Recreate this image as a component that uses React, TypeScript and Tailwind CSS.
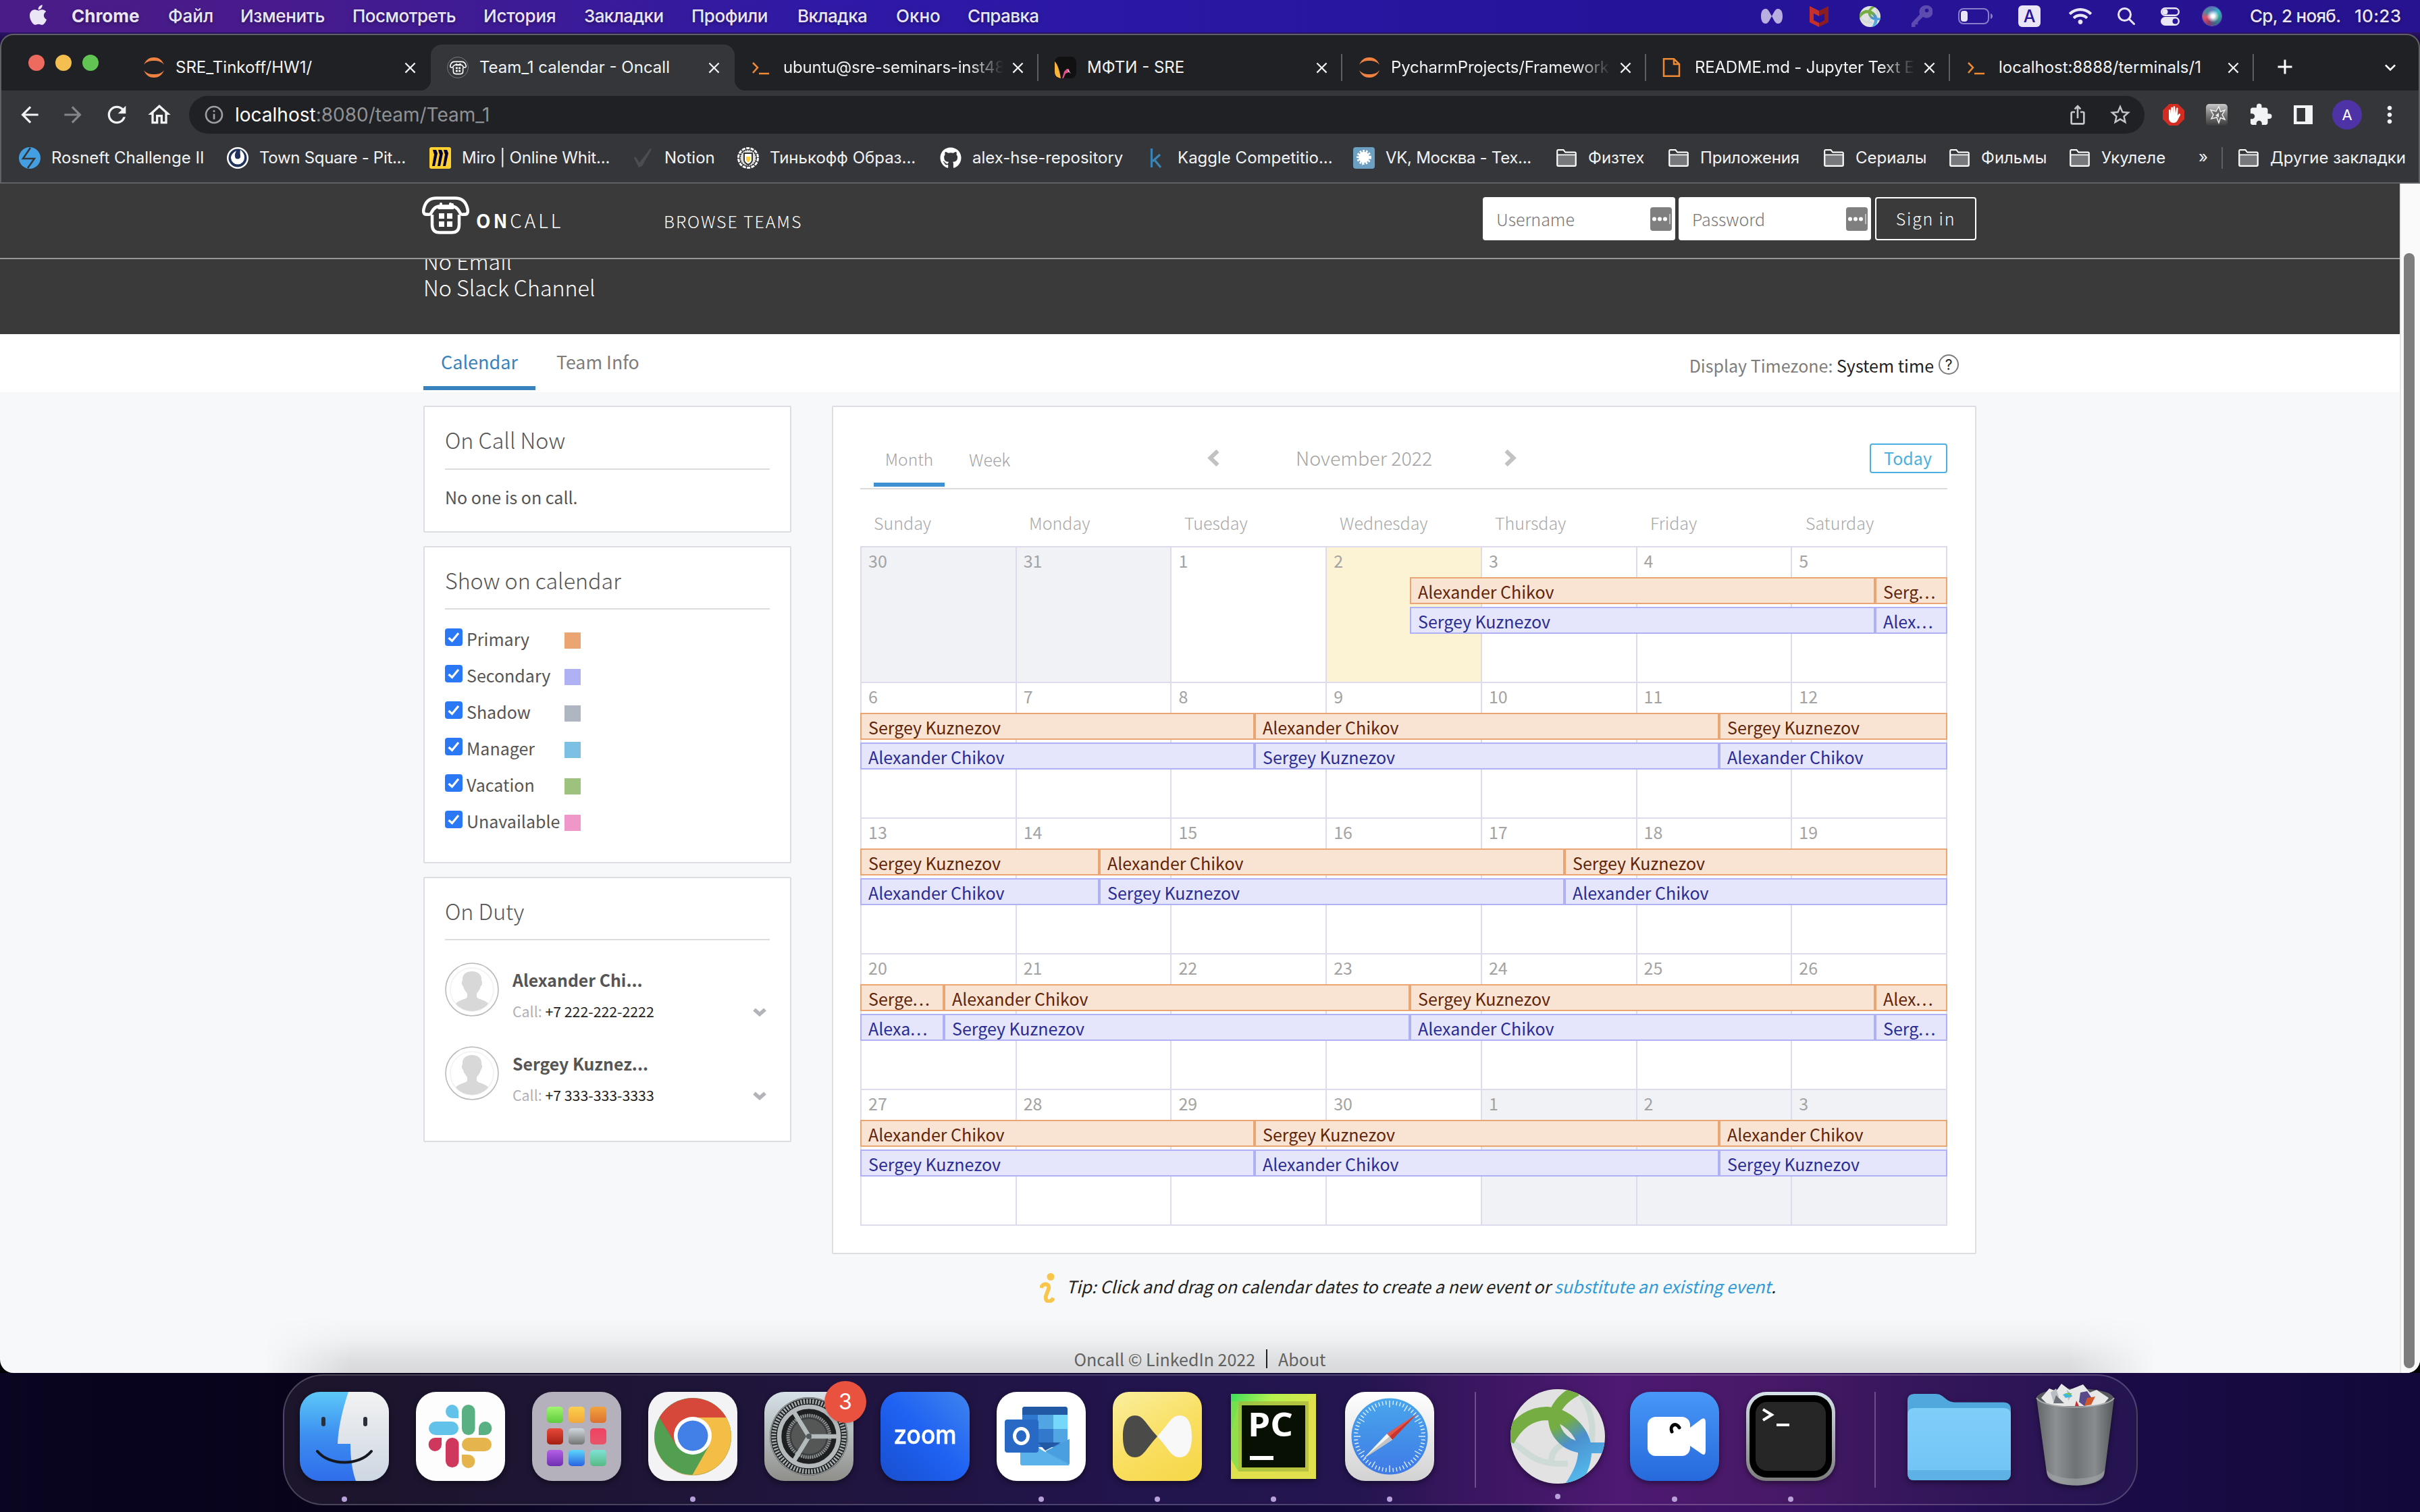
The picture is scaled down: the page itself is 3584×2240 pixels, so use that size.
import type { ReactNode } from "react";
import { FaApple, FaGithub, FaWifi } from "react-icons/fa";
import {
  MdAdd, MdArrowBack, MdArrowForward, MdExtension, MdInfoOutline, MdIosShare,
  MdKeyboardArrowDown, MdMoreVert, MdOutlineHome, MdRefresh, MdStarBorder, MdClose,
} from "react-icons/md";

/* ---------- macOS menu bar ---------- */

const menuItems: [string, string][] = [
  ["Chrome", "w-[143px] font-bold"],
  ["Файл", "w-[107px]"],
  ["Изменить", "w-[166px] tracking-[-0.3px]"],
  ["Посмотреть", "w-[194px] tracking-[-0.5px]"],
  ["История", "w-[149px] tracking-[-0.2px]"],
  ["Закладки", "w-[159px] tracking-[-0.6px]"],
  ["Профили", "w-[157px] tracking-[-0.5px]"],
  ["Вкладка", "w-[146px] tracking-[-0.6px]"],
  ["Окно", "w-[106px]"],
  ["Справка", "w-[120px] tracking-[-0.6px]"],
];

function MenuBar() {
  return (
    <div className="flex h-[48px] shrink-0 items-center bg-[linear-gradient(90deg,#4a1c87_0%,#471b8d_12%,#3a1b99_24%,#2f19a6_34%,#2a18a4_48%,#25139a_68%,#27138f_100%)] pl-[40px] text-[26px] font-medium leading-none text-[#eae6f5] [text-shadow:0_2px_5px_rgba(0,0,0,0.35)]">
      <FaApple className="mr-[33px] -mt-1 h-[34px] w-[33px] shrink-0" />
      {menuItems.map(([t, c]) => (
        <span key={t} className={"shrink-0 whitespace-nowrap " + c}>{t}</span>
      ))}
      <div className="ml-auto flex shrink-0 items-center pr-[9px]">
        <svg className="mr-[40px] h-[22px] w-[32px]" viewBox="0 0 32 22">
          <path d="M7 0C2 0 0 5 0 11s2 11 7 11c4 0 6-6 9-11C13 6 11 0 7 0zM25 0c5 0 7 5 7 11s-2 11-7 11c-4 0-6-6-9-11 3-5 5-11 9-11z" fill="#b9aee0" />
        </svg>
        <svg className="mr-[46px] h-[31px] w-[28px]" viewBox="0 0 28 31">
          <path d="M0 0l14 7v8l-8-4v10l8 4v6L0 24z" fill="#c5302b" />
          <path d="M28 0L14 7v8l8-4v10l-8 4v6l14-7z" fill="#8a1c22" />
        </svg>
        <svg className="mr-[45px] h-[31px] w-[31px]" viewBox="0 0 140 140"><AnyConnectArt /></svg>
        <svg className="mr-[38px] h-[32px] w-[32px]" viewBox="0 0 32 34">
          <path d="M22 0a10 10 0 0 0-9 14L0 28v6h6v-4h4v-4l8-8A10 10 0 1 0 22 0zm2 5a3 3 0 1 1 0 6 3 3 0 0 1 0-6z" fill="#5d4bb0" />
        </svg>
        <svg className="mr-[38px] h-[24px] w-[51px]" viewBox="0 0 51 24">
          <rect x="1" y="1" width="44" height="22" rx="7" fill="none" stroke="#8b7dcc" strokeWidth="2" />
          <rect x="4" y="4" width="10" height="16" rx="4" fill="#eae6f5" />
          <path d="M48 8c4 1 4 7 0 8z" fill="#8b7dcc" />
        </svg>
        <span className="mr-[42px] flex h-[32px] w-[33px] items-center justify-center rounded-[6px] bg-[#eae6f5] text-[25px] text-[#26139a] [text-shadow:none]">A</span>
        <FaWifi className="mr-[38px] h-[32px] w-[34px]" />
        <svg className="mr-[38px] h-[26px] w-[26px]" viewBox="0 0 26 26" fill="none" stroke="#eae6f5" strokeWidth="3" strokeLinecap="round">
          <circle cx="10.500" cy="10.500" r="9" /><path d="M17 17l7.500 7.500" />
        </svg>
        <svg className="mr-[34px] h-[27px] w-[28px]" viewBox="0 0 28 27">
          <rect x="1.200" y="1.200" width="25.600" height="10.600" rx="5.300" fill="none" stroke="#eae6f5" strokeWidth="2.400" />
          <circle cx="6.500" cy="6.500" r="4" fill="#eae6f5" />
          <rect x="0" y="14" width="28" height="13" rx="6.500" fill="#eae6f5" />
          <circle cx="21.500" cy="20.500" r="4" fill="#27139a" />
        </svg>
        <span className="mr-[42px] h-[28px] w-[28px] rounded-full bg-[radial-gradient(circle_at_55%_50%,#ffffff_0_10%,transparent_45%),conic-gradient(#5a7ab8,#35b5c8,#2f9a94,#3c6a8c,#8a3a6a,#e0506a,#4a8a9a,#5a7ab8)] ring-1 ring-white/30" />
        <span className="w-[145px] whitespace-nowrap tracking-[-0.7px]">Ср, 2 нояб.</span>
        <span className="w-[98px] whitespace-nowrap pl-[10px] tracking-[0.3px]">10:23</span>
      </div>
    </div>
  );
}

/* ---------- Favicons ---------- */

const JupyterIcon = () => (
  <svg className="h-[32px] w-[32px]" viewBox="0 0 32 32" fill="#ef8240">
    <path d="M1 12C4 4 10 1 16 1s12 3 15 11c-4-5-9-6-15-6S5 7 1 12zM1 20c3 8 9 11 15 11s12-3 15-11c-4 5-9 6-15 6S5 25 1 20z" />
  </svg>
);

const TerminalFavicon = () => (
  <svg className="h-[32px] w-[32px]" viewBox="0 0 32 32" fill="none" stroke="#ef8a34">
    <path d="M3 9l7 7-7 8" strokeWidth="2.500" /><path d="M12 25h15" strokeWidth="2.500" />
  </svg>
);

function PhoneGlyph() {
  return (
    <>
      <path d="M8 26.500C1.500 27.500 1.500 22 3 17C5.500 7 11 2.500 21 2.500H49C59 2.500 64.500 7 67 17C68.500 22 68.500 27.500 62 26.500C56 27.500 57 24 53 19C50 15.500 48 15 45 14.500H25C22 15 20 15.500 17 19C13 24 14 27.500 8 26.500Z" fill="none" stroke="currentColor" strokeWidth="4.500" />
      <path d="M15 27V42Q15 53.500 26 53.500H44Q55 53.500 55 42V27" fill="none" stroke="currentColor" strokeWidth="4.500" />
      <path d="M25 17H45V12M28 17V11M42 17V11" fill="none" stroke="currentColor" strokeWidth="4" strokeLinecap="round" />
      <path d="M25 25h8v8h-8zM37 25h8v8h-8zM25 37h8v8h-8zM37 37h8v8h-8z" fill="currentColor" />
    </>
  );
}

const OncallFavicon = () => (
  <span className="flex h-[32px] w-[32px] items-center justify-center rounded-full border border-[#77787b] text-white">
    <svg className="h-[21px] w-[25px]" viewBox="0 0 70 56"><PhoneGlyph /></svg>
  </span>
);

const MiptIcon = () => (
  <svg className="h-[32px] w-[32px]" viewBox="0 0 32 32">
    <rect width="32" height="32" rx="8" fill="#111" />
    <path d="M0 7c4 4 7 12 9 25C3 31 0 28 0 22z" fill="#f7b53b" />
    <path d="M11 32l3-10 4-4c4 0 4 2 3 5l-5 2-3 7z" fill="#e0508a" />
    <path d="M19 18l5 7-4-3z" fill="#ddd" />
  </svg>
);

const FileIcon = () => (
  <svg className="h-[28px] w-[28px]" viewBox="0 0 28 28" fill="none" stroke="#ef8a34" strokeWidth="2.500">
    <path d="M2 1.300H17L25 9V26.700H2zM17 1.300V9H25" />
  </svg>
);

/* ---------- Chrome window frame ---------- */

const tabs: { title: string; icon: ReactNode; active?: boolean; sep?: boolean }[] = [
  { title: "SRE_Tinkoff/HW1/", icon: <JupyterIcon /> },
  { title: "Team_1 calendar - Oncall", icon: <OncallFavicon />, active: true },
  { title: "ubuntu@sre-seminars-inst48", icon: <TerminalFavicon />, sep: true },
  { title: "МФТИ - SRE", icon: <MiptIcon />, sep: true },
  { title: "PycharmProjects/Framework", icon: <JupyterIcon />, sep: true },
  { title: "README.md - Jupyter Text E", icon: <FileIcon />, sep: true },
  { title: "localhost:8888/terminals/1", icon: <TerminalFavicon />, sep: true },
];

function TabStrip() {
  return (
    <div className="flex h-[82px] items-end">
      <div className="mb-[29px] ml-[40px] mr-[42px] flex gap-[16px]">
        <i className="h-[24px] w-[24px] rounded-full bg-[#ed6a5e]" />
        <i className="h-[24px] w-[24px] rounded-full bg-[#f5bf4f]" />
        <i className="h-[24px] w-[24px] rounded-full bg-[#61c554]" />
      </div>
      {tabs.map((t) => (
        <div key={t.title} className={"relative flex h-[68px] w-[450px] shrink-0 items-center pl-[24px] " + (t.active ? "rounded-t-[16px] bg-[#35363a]" : "")}>
          {t.active && (
            <>
              <i className="absolute bottom-0 left-[-16px] h-[16px] w-[16px] bg-[radial-gradient(circle_at_0_0,transparent_16px,#35363a_16.5px)]" />
              <i className="absolute bottom-0 right-[-16px] h-[16px] w-[16px] bg-[radial-gradient(circle_at_100%_0,transparent_16px,#35363a_16.5px)]" />
            </>
          )}
          <span className="flex w-[48px] shrink-0">{t.icon}</span>
          <span className={"w-[334px] shrink-0 whitespace-nowrap text-[24px] leading-[36px] text-[#f1f3f4] " + (t.title.endsWith("/1") ? "" : t.title.length > 24 ? "tracking-[-0.2px] [mask-image:linear-gradient(90deg,#000_276px,transparent_326px)]" : "")}>{t.title}</span>
          <MdClose className="h-[27px] w-[27px] shrink-0 text-[#f1f3f4]" />
          {t.sep && <i className="absolute right-0 top-[14px] h-[40px] w-[2px] bg-[#5c5e63]" />}
        </div>
      ))}
      <MdAdd className="mb-[17px] ml-[28px] h-[36px] w-[36px] shrink-0 text-white" />
      <MdKeyboardArrowDown className="mb-[18px] ml-auto mr-[26px] h-[32px] w-[32px] shrink-0 text-white" />
    </div>
  );
}

function Toolbar() {
  return (
    <div className="flex h-[72px] items-center bg-[#35363a] text-[#f1f3f4]">
      <MdArrowBack className="ml-[23px] h-[38px] w-[38px]" />
      <MdArrowForward className="ml-[26px] h-[38px] w-[38px] text-[#85868a]" />
      <MdRefresh className="ml-[26px] h-[40px] w-[40px]" />
      <MdOutlineHome className="ml-[23px] h-[40px] w-[40px]" />
      <div className="ml-[24px] flex h-[56px] w-[2896px] items-center rounded-full bg-[#202124] pl-[21px] pr-[18px]">
        <MdInfoOutline className="h-[32px] w-[32px] text-[#9aa0a6]" />
        <span className="ml-[15px] flex-1 text-[28px] leading-none text-[#8f9195]"><b className="font-normal text-white">localhost</b>:8080/team/Team_1</span>
        <MdIosShare className="h-[32px] w-[32px] text-[#c4c7c9]" />
        <MdStarBorder className="ml-[29px] h-[36px] w-[36px] text-[#c4c7c9]" />
      </div>
      <svg className="ml-[27px] h-[32px] w-[32px]" viewBox="0 0 32 32">
        <path d="M9.500 0h13L32 9.500v13L22.500 32h-13L0 22.500v-13z" fill="#d32d22" />
        <path d="M9 17V9.500a1.300 1.300 0 0 1 2.600 0V15l.8-9a1.300 1.300 0 0 1 2.600 0v8l.6-9.500a1.300 1.300 0 0 1 2.600 0L19 14l1-7.500a1.300 1.300 0 0 1 2.500 0L22 17l2-2.500a1.500 1.500 0 0 1 2 2L21.500 25c-1 2-3 3-5.500 3-4.500 0-7-3-7-7z" fill="#fff" />
      </svg>
      <svg className="ml-[32px] h-[32px] w-[32px]" viewBox="0 0 32 32">
        <defs><linearGradient id="ext" x1="0" y1="0" x2="0" y2="1"><stop offset="0" stopColor="#c8c8c8" /><stop offset=".5" stopColor="#7a7a7a" /><stop offset="1" stopColor="#3c3c3c" /></linearGradient></defs>
        <rect width="32" height="32" rx="5" fill="url(#ext)" />
        <path d="M19 4l2.500 7.500L28 9l-4 7 4 7-6.500-2.500L19 28l-3-8-8 2 3-6-4-7 8 2z" fill="#6a6a6a" stroke="#f0f0f0" strokeWidth="1.500" />
        <path d="M19 6v7l-5 4 5 3z" fill="#eee" />
      </svg>
      <MdExtension className="ml-[31px] h-[36px] w-[36px]" />
      <svg className="ml-[31px] h-[28px] w-[28px]" viewBox="0 0 28 28"><path d="M0 0h28v28H0zM4.500 4v20H17V4z" fill="#f1f3f4" fillRule="evenodd" /></svg>
      <span className="ml-[29px] flex h-[44px] w-[44px] items-center justify-center rounded-full bg-[#4e33a6] text-[22px] text-white">A</span>
      <MdMoreVert className="ml-[21px] h-[40px] w-[40px]" />
    </div>
  );
}

const FolderIcon = () => (
  <svg className="h-[26px] w-[32px]" viewBox="0 0 32 28">
    <path d="M1.200 3.200Q1.200 1.200 3 1.200H11L14 5H29Q30.800 5 30.800 7V25Q30.800 26.800 29 26.800H3Q1.200 26.800 1.200 25Z" fill="#77787b" stroke="#fff" strokeWidth="2.400" />
    <path d="M2.400 2.400H10.500L13.500 6.200H29.600V9H2.400Z" fill="#35363a" />
    <path d="M1.200 9H30.800" stroke="#fff" strokeWidth="2" />
  </svg>
);

const bookmarks: { t: string; w: string; icon: ReactNode }[] = [
  { t: "Rosneft Challenge II", w: "w-[308px]", icon: (
    <svg className="h-[32px] w-[32px]" viewBox="0 0 32 32"><circle cx="16" cy="16" r="16" fill="#439fe0" /><path d="M17 1L6 17h17L13 31" fill="none" stroke="#35363a" strokeWidth="2.500" /></svg>) },
  { t: "Town Square - Pit...", w: "w-[300px] tracking-[-0.3px]", icon: (
    <svg className="h-[32px] w-[32px]" viewBox="0 0 32 32"><circle cx="16" cy="16" r="16" fill="#fff" /><circle cx="16" cy="16" r="13.500" fill="#1e325c" /><path d="M20 4c4 3 6 7 6 11a10 10 0 0 1-20 1c0-5 4-8 8-11-1 3-3 6-2 9a4 4 0 0 0 8-1c0-3-1-5 0-9z" fill="#fff" /></svg>) },
  { t: "Miro | Online Whit...", w: "w-[300px] tracking-[-0.2px]", icon: (
    <svg className="h-[32px] w-[32px]" viewBox="0 0 32 32"><rect width="32" height="32" rx="3" fill="#ffd02f" /><path d="M5 4h5l2 5-4 19H4l3-17zM13 4h5l2 5-4 19h-4l3-17zM21 4h5l2 5-4 19h-4l3-17z" fill="#050038" /></svg>) },
  { t: "Notion", w: "w-[156px]", icon: (
    <svg className="h-[32px] w-[32px]" viewBox="0 0 32 32"><path d="M3 16l2-2 6 9L27 2l2 1-14 25-5 2z" fill="#4c4d51" /></svg>) },
  { t: "Тинькофф Образ...", w: "w-[300px]", icon: (
    <svg className="h-[32px] w-[32px]" viewBox="0 0 32 32"><circle cx="16" cy="16" r="14.500" fill="none" stroke="#fff" strokeWidth="3" strokeDasharray="5 1.500" /><circle cx="16" cy="16" r="12" fill="#ddd" stroke="#35363a" strokeWidth="2" strokeDasharray="2 1.500" /><path d="M10 9h12v10c0 4-6 7-6 7s-6-3-6-7z" fill="#fff" stroke="#333" strokeWidth="2" /><path d="M13 14h6v5l-3 4-3-4z" fill="#f5cf3c" /></svg>) },
  { t: "alex-hse-repository", w: "w-[304px]", icon: <FaGithub className="h-[32px] w-[32px] text-white" /> },
  { t: "Kaggle Competitio...", w: "w-[308px]", icon: (
    <svg className="h-[32px] w-[32px]" viewBox="0 0 32 32"><path d="M9.500 2V30M22 11L11 21M13 18L23 30" fill="none" stroke="#3a84b5" strokeWidth="3.200" /></svg>) },
  { t: "VK, Москва - Тех...", w: "w-[300px] tracking-[-0.3px]", icon: (
    <svg className="h-[32px] w-[32px]" viewBox="0 0 32 32"><rect width="32" height="32" rx="4" fill="#6c9fc0" /><circle cx="16" cy="15" r="9" fill="none" stroke="#fff" strokeWidth="4" strokeDasharray="2.500 2" /><circle cx="16" cy="15" r="8" fill="#fff" /><path d="M13 20h3l-3 8z" fill="#fff" /></svg>) },
  { t: "Физтех", w: "w-[166px]", icon: <FolderIcon /> },
  { t: "Приложения", w: "w-[230px] tracking-[-0.2px]", icon: <FolderIcon /> },
  { t: "Сериалы", w: "w-[186px]", icon: <FolderIcon /> },
  { t: "Фильмы", w: "w-[178px]", icon: <FolderIcon /> },
  { t: "Укулеле", w: "w-[192px]", icon: <FolderIcon /> },
];

function BookmarksBar() {
  return (
    <div className="flex h-[64px] items-center bg-[#35363a] pb-[8px] pl-[26px] text-[24px] leading-none text-[#f1f3f4]">
      {bookmarks.map((b) => (
        <div key={b.t} className={"flex h-[40px] shrink-0 items-center gap-[16px] whitespace-nowrap " + b.w}>
          {b.icon}<span>{b.t}</span>
        </div>
      ))}
      <span className="w-[34px] shrink-0 pb-[2px]">»</span>
      <i className="mr-[22px] h-[32px] w-[2px] shrink-0 bg-[#5f6064]" />
      <div className="flex items-center gap-[16px] whitespace-nowrap"><FolderIcon /><span>Другие закладки</span></div>
    </div>
  );
}

/* ---------- Oncall page ---------- */

const PasswordDots = () => (
  <svg className="h-[35px] w-[32px]" viewBox="0 0 32 35">
    <rect width="32" height="35" rx="4" fill="#7f7f7f" />
    <circle cx="6" cy="17.500" r="3" fill="#fff" /><circle cx="14" cy="17.500" r="3" fill="#fff" /><circle cx="22" cy="17.500" r="3" fill="#fff" />
    <path d="M29 10v15" stroke="#d5d5d5" strokeWidth="1.500" />
  </svg>
);

function LoginField({ label }: { label: string }) {
  return (
    <div className="flex h-[64px] w-[285px] items-center justify-between rounded-[4px] bg-white pl-[20px] pr-[5px] font-light text-[#757575]">
      <span className="leading-[40px]">{label}</span>
      <span className="-mb-[1px] -mt-[1px]"><PasswordDots /></span>
    </div>
  );
}

function NavBar() {
  return (
    <div className="h-[112px] border-b-2 border-[#989898] bg-[#3a3a3a] text-white">
      <div className="mx-auto flex w-[2300px] items-start">
        <svg className="-ml-[2px] mt-[19px] h-[56px] w-[70px] shrink-0" viewBox="0 0 70 56"><PhoneGlyph /></svg>
        <span className="ml-[10px] mt-[34px] w-[150px] whitespace-nowrap text-[28px] font-light leading-[40px] tracking-[3.9px]"><b className="font-bold">ON</b>CALL</span>
        <span className="ml-[128px] mt-[35px] whitespace-nowrap font-light leading-[40px] tracking-[1.9px]">BROWSE TEAMS</span>
        <div className="ml-auto mt-[20px] flex">
          <LoginField label="Username" />
          <span className="w-[5px]" />
          <LoginField label="Password" />
          <span className="ml-[6px] flex h-[64px] w-[150px] items-center justify-center rounded-[4px] border-2 border-white font-light tracking-[1.8px]">Sign in</span>
        </div>
      </div>
    </div>
  );
}

function Card({ title, h, hr = "mb-[2px] mt-[18px]", children }: { title: string; h: string; hr?: string; children: ReactNode }) {
  return (
    <section className={"rounded-[2px] border-2 border-[#dcdee1] bg-white pl-[30px] pr-[30px] pt-[24px] " + h}>
      <h2 className="text-[32.200px] font-light leading-[48px] text-[#555]">{title}</h2>
      <hr className={"border-0 border-t-2 border-[#dcdcdc] " + hr} />
      {children}
    </section>
  );
}

const roles: [string, string][] = [
  ["Primary", "bg-[#eba573]"],
  ["Secondary", "bg-[#b0b0f5]"],
  ["Shadow", "bg-[#aeb7c1]"],
  ["Manager", "bg-[#7cc1e3]"],
  ["Vacation", "bg-[#9dc27e]"],
  ["Unavailable", "bg-[#f097c9]"],
];

function Person({ name, phone }: { name: string; phone: string }) {
  return (
    <div className="flex h-[124px] items-start">
      <svg className="h-[80px] w-[80px] shrink-0" viewBox="0 0 80 80">
        <circle cx="40" cy="40" r="39" fill="#fff" stroke="#b9b9b9" strokeWidth="1.600" />
        <circle cx="40" cy="40" r="32" fill="none" stroke="#f4f4f4" strokeWidth="2" />
        <path d="M40 13c9 0 15 5 14 14 2 1 1 7-1 8-1 5-4 8-6 11v5c2 4 13 4 17 10-6 7-15 11-24 11s-18-4-24-11c4-6 15-6 17-10v-5c-2-3-5-6-6-11-2-1-3-7-1-8-1-9 5-14 14-14z" fill="#d8d8d8" />
      </svg>
      <div className="ml-[20px] flex-1 whitespace-nowrap pt-[5px]">
        <div className="text-[24.800px] font-bold leading-[40px] text-[#555]">{name}</div>
        <div className="mt-[7px] text-[21.300px] leading-[40px] text-[#b0b0b5]">Call: <span className="text-[#222]">{phone}</span></div>
      </div>
      <svg className="mr-[5px] mt-[67px] h-[13px] w-[20px]" viewBox="0 0 20 13"><path d="M2 2.500L10 9.500L18 2.500" fill="none" stroke="#b3b3ba" strokeWidth="5.500" /></svg>
    </div>
  );
}

function Sidebar() {
  return (
    <aside className="flex w-[545px] shrink-0 flex-col gap-[20px] text-[#555]">
      <Card title="On Call Now" h="h-[188px]" hr="mt-[19px]">
        <p className="mt-[20px] leading-[40px]">No one is on call.</p>
      </Card>
      <Card title="Show on calendar" h="h-[470px]">
        <div className="pt-[14px]">
          {roles.map(([r, c]) => (
            <div key={r} className="flex h-[54px] items-center leading-[54px]">
              <span className="-mt-[5px] flex h-[26px] w-[26px] items-center justify-center rounded-[4px] bg-[#2a78f6]">
                <svg className="h-[16px] w-[18px]" viewBox="0 0 18 16"><path d="M1.500 9L6.500 13.500L16 2" fill="none" stroke="#fff" strokeWidth="3.200" /></svg>
              </span>
              <span className="w-[151px] pl-[6px]">{r}</span>
              <i className={"mt-[5px] h-[24px] w-[24px] " + c} />
            </div>
          ))}
        </div>
      </Card>
      <Card title="On Duty" h="h-[393px]">
        <div className="pt-[31px]">
          <Person name="Alexander Chi..." phone="+7 222-222-2222" />
          <Person name="Sergey Kuznez..." phone="+7 333-333-3333" />
        </div>
      </Card>
    </aside>
  );
}

const SK = "Sergey Kuznezov";
const AC = "Alexander Chikov";

type Week = { days: number[]; off: number[]; today?: number; pad?: string; events: [string, string, string][] };

const weeks: Week[] = [
  { days: [30, 31, 1, 2, 3, 4, 5], off: [0, 1], today: 3, pad: "pl-[814px]", events: [["w-[689px]", AC, SK], ["w-[107px]", "Serg...", "Alex..."]] },
  { days: [6, 7, 8, 9, 10, 11, 12], off: [], events: [["w-[584px]", SK, AC], ["w-[688px]", AC, SK], ["w-[338px]", SK, AC]] },
  { days: [13, 14, 15, 16, 17, 18, 19], off: [], events: [["w-[354px]", SK, AC], ["w-[689px]", AC, SK], ["w-[567px]", SK, AC]] },
  { days: [20, 21, 22, 23, 24, 25, 26], off: [], events: [["w-[124px]", "Serge...", "Alexa..."], ["w-[690px]", AC, SK], ["w-[689px]", SK, AC], ["w-[107px]", "Alex...", "Serg..."]] },
  { days: [27, 28, 29, 30, 1, 2, 3], off: [4, 5, 6], events: [["w-[584px]", AC, SK], ["w-[688px]", SK, AC], ["w-[338px]", AC, SK]] },
];

function EventBar({ name, look }: { name: string; look: string }) {
  const cut = name.endsWith("...");
  return (
    <div className={"shrink-0 whitespace-nowrap border-2 pl-[10px] leading-[38px] " + look}>
      {cut ? <>{name.slice(0, -3)}<span className="tracking-[2.2px]">...</span></> : name}
    </div>
  );
}

function WeekRow({ week }: { week: Week }) {
  return (
    <div className="relative flex h-[201px] border-t-2 border-[#dddbec]">
      {week.days.map((d, i) => (
        <div key={i} className={"flex-1 border-l-2 border-[#dddbec] pl-[10px] leading-[38px] text-[#a3a3a3] " + (week.off.includes(i) ? "bg-[#f1f2f6]" : week.today === i ? "bg-[#fcf2d4]" : "bg-white")}>{d}</div>
      ))}
      {/* shift bars lie across the day cells */}
      <div className={"absolute -right-[2px] left-0 top-[44px] flex flex-col gap-[4px] " + (week.pad ?? "")}>
        <div className="flex h-[40px]">
          {week.events.map(([w, a], i) => (
            <EventBar key={i} name={a} look={"border-[#eba573] bg-[#f9e3d3] text-[#5e250a] " + w} />
          ))}
        </div>
        <div className="flex h-[40px]">
          {week.events.map(([w, , b], i) => (
            <EventBar key={i} name={b} look={"border-[#b0b0f5] bg-[#e5e5fb] text-[#2a2c94] " + w} />
          ))}
        </div>
      </div>
    </div>
  );
}

function CalendarCard() {
  return (
    <section className="h-[1257px] w-[1695px] rounded-[2px] border-2 border-[#dcdee1] bg-white pl-[40px] pr-[41px]">
      <div className="flex h-[122px] items-start border-b-2 border-[#dcdcdc] pl-[20px] font-light leading-[40px] text-[#a3a3a3]">
        <span className="h-[118px] w-[105px] border-b-[6px] border-[#3d90d2] pt-[57px] text-center text-[24.500px]">Month</span>
        <span className="ml-[36px] w-[62px] pt-[57px]">Week</span>
        <svg className="ml-[291px] mt-[63px] h-[25px] w-[18px]" viewBox="0 0 18 25"><path d="M15.500 2L4.500 12.500L15.500 23" fill="none" stroke="#c2c2c2" strokeWidth="6" /></svg>
        <span className="ml-[113px] mt-[55px] w-[203px] whitespace-nowrap text-[28.500px]">November 2022</span>
        <svg className="ml-[106px] mt-[63px] h-[25px] w-[18px]" viewBox="0 0 18 25"><path d="M2.500 2L13.500 12.500L2.500 23" fill="none" stroke="#c2c2c2" strokeWidth="6" /></svg>
        <span className="ml-auto mt-[54px] h-[44px] w-[115px] rounded-[4px] border-2 border-[#4bb0e0] pr-[2px] text-center font-normal leading-[39px] text-[#4bb0e0]">Today</span>
      </div>
      <div className="flex h-[84px] pt-[29px] font-light leading-[40px] text-[#a8a8a8]">
        {["Sunday", "Monday", "Tuesday", "Wednesday", "Thursday", "Friday", "Saturday"].map((d) => (
          <span key={d} className="flex-1 pl-[20px]">{d}</span>
        ))}
      </div>
      <div className="border-b-2 border-r-2 border-[#dddbec]">
        {weeks.map((w, i) => <WeekRow key={i} week={w} />)}
      </div>
    </section>
  );
}

function OncallPage() {
  return (
    <div className="relative flex h-[1762px] overflow-hidden rounded-b-[20px] bg-[#f7f8fa] font-['Noto_Sans_CJK_SC',sans-serif] text-[25px]">
      <div className="w-[3554px] shrink-0">
        <NavBar />
        <div className="h-[111px] overflow-hidden bg-[#3a3a3a]">
          <div className="mx-auto -mt-[17px] w-[2300px] text-[32.200px] font-light leading-[39px] text-white">
            <p>No Email</p>
            <p>No Slack Channel</p>
          </div>
        </div>
        <div className="h-[86px] bg-white">
          <div className="mx-auto flex w-[2300px] items-start">
            <span className="h-[83px] w-[166px] border-b-[6px] border-[#3883bd] pt-[21px] text-center text-[27px] leading-[40px] text-[#3883bd]">Calendar</span>
            <span className="ml-[31px] mt-[21px] text-[26.700px] leading-[40px] text-[#7d7d7d]">Team Info</span>
            <span className="ml-auto mt-[26px] leading-[40px] text-[#7d7d7d]">Display Timezone: <span className="text-[#222]">System time</span></span>
            <span className="ml-[7px] mr-[26px] mt-[30px] flex h-[30px] w-[30px] items-center justify-center rounded-full border-2 border-[#7d7d7d] font-[Inter] text-[21px] leading-none text-[#222]">?</span>
          </div>
        </div>
        <div className="mx-auto mt-[20px] flex w-[2300px] gap-[60px]">
          <Sidebar />
          <div>
            <CalendarCard />
            <div className="ml-[308px] mt-[27px] flex whitespace-nowrap text-[25.200px] italic leading-[40px] text-[#222]">
              <svg className="mr-[17px] mt-[1px] h-[44px] w-[22px]" viewBox="0 0 22 44">
                <circle cx="16" cy="5.500" r="5.500" fill="#f7c64a" />
                <path d="M2 22C3 15 15 14 13 23L9 34C7 44 17 44 20 37" fill="none" stroke="#f7c64a" strokeWidth="5.800" />
              </svg>
              <span>Tip: Click and drag on calendar dates to create a new event or <span className="text-[#2f9bd6]">substitute an existing event</span>.</span>
            </div>
          </div>
        </div>
        <div className="-mb-[20px] mt-[61px] flex h-[44px] items-center justify-center leading-[44px] text-[#6c6c6c]">
          <span className="-mt-[1px]">Oncall © LinkedIn 2022</span>
          <i className="mx-[16px] h-[28px] w-[2px] bg-[#222]" />
          <span className="-mt-[1px]">About</span>
        </div>
      </div>
      <div className="flex w-[30px] justify-center border-l-2 border-[#e6e6e6] bg-[#fafafa] pr-[6px] pt-[103px]">
        <i className="-mr-[2px] h-[1652px] w-[16px] rounded-full bg-[#7d7d7d]" />
      </div>
      {/* shadow cast by the dock */}
      <i className="absolute bottom-0 left-[390px] h-[84px] w-[2804px] bg-[linear-gradient(180deg,transparent_0%,rgba(0,0,0,0.03)_40%,rgba(0,0,0,0.10)_80%,rgba(0,0,0,0.125)_100%)] [mask-image:linear-gradient(90deg,transparent,#000_130px,#000_2674px,transparent)]" />
    </div>
  );
}

/* ---------- Dock ---------- */

function AnyConnectArt() {
  return (
    <>
      <defs>
        <clipPath id="ac"><circle cx="70" cy="70" r="70" /></clipPath>
        <linearGradient id="acg" gradientUnits="userSpaceOnUse" x1="40" y1="20" x2="110" y2="140"><stop offset="0" stopColor="#76ad42" /><stop offset=".32" stopColor="#76ad42" /><stop offset=".55" stopColor="#4b90d0" /><stop offset="1" stopColor="#55c0f0" /></linearGradient>
      </defs>
      <g clipPath="url(#ac)" fill="none">
        <rect width="140" height="140" fill="#e2e2e2" />
        <path d="M0 78C20 85 30 115 85 110M60 110C60 80 90 75 110 80M105 10C120 30 125 60 118 90" stroke="#c9d8d3" strokeWidth="9" opacity=".8" />
        <path d="M-4 76C12 46 34 36 54 36C84 38 106 62 110 86C112 110 100 130 88 148" stroke="url(#acg)" strokeWidth="20" />
        <path d="M98 2C78 12 64 28 64 46C66 68 84 87 112 87H142" stroke="url(#acg)" strokeWidth="16" />
      </g>
    </>
  );
}

function AppIcon({ children, dot, size = "h-[132px] w-[132px]", box = "0 0 132 132", m = "" }: { children: ReactNode; dot?: boolean; size?: string; box?: string; m?: string }) {
  return (
    <div className={"relative flex h-full shrink-0 flex-col items-center " + m}>
      <svg className={size + " shrink-0 drop-shadow-[0_3px_4px_rgba(0,0,0,0.45)]"} viewBox={box}>{children}</svg>
      {dot && <i className="absolute bottom-[3px] h-[8px] w-[8px] rounded-full bg-[#b7a0d8]" />}
    </div>
  );
}

function Grad({ id, stops, horizontal }: { id: string; stops: string[]; horizontal?: boolean }) {
  return (
    <linearGradient id={id} x1="0" y1="0" x2={horizontal ? "1" : "0"} y2={horizontal ? "0" : "1"}>
      {stops.map((s, i) => <stop key={i} offset={i / (stops.length - 1)} stopColor={s} />)}
    </linearGradient>
  );
}

const padColors: [string, string][] = [
  ["#a0f56e", "#5fcb3e"], ["#fbcf4e", "#f1a83a"], ["#f2a33c", "#dc7132"],
  ["#e8483a", "#a51f12"], ["#cfd9df", "#747474"], ["#ee4362", "#e8546a"],
  ["#b45fe6", "#6f2fb0"], ["#5bd6fb", "#2b62e0"], ["#7ee3d6", "#57b984"],
];

function Dock() {
  const ticks = Array.from({ length: 60 }, (_, i) => i * 6);
  return (
    <div className="ml-[419px] mt-[2px] flex h-[194px] w-[2747px] items-start rounded-[60px] border-2 border-white/20 bg-[linear-gradient(90deg,#1c152b_0%,#1f1538_22%,#22144c_45%,#241550_58%,#3a1660_64%,#4d1972_72%,#481967_80%,#35165c_88%,#241450_100%)] pl-[23px] pt-[24px]">
      <div className="flex h-full gap-[40px]">
        <AppIcon dot>
          <defs><Grad id="f1" stops={["#5cc8f8", "#3c8df0", "#2f6eea"]} /><Grad id="f2" stops={["#f2f2f2", "#cdd7e2"]} /><clipPath id="fc"><rect width="132" height="132" rx="30" /></clipPath></defs>
          <g clipPath="url(#fc)">
            <rect width="132" height="132" fill="url(#f1)" />
            <path d="M72 0C62 30 57 55 56 77H75C75 100 78 118 83 132H132V0Z" fill="url(#f2)" />
          </g>
          <path d="M35 40V48M97 40V48" stroke="#2a2f3a" strokeWidth="6" strokeLinecap="round" />
          <path d="M26 88C44 110 88 110 106 88" fill="none" stroke="#15181f" strokeWidth="4" strokeLinecap="round" />
        </AppIcon>
        <AppIcon>
          <rect width="132" height="132" rx="30" fill="#fdfdfd" />
          <path d="M63 39H53.500A9.500 10 0 1 1 63 29Z" fill="#62c2ea" /><rect x="19" y="44" width="44" height="20" rx="10" fill="#62c2ea" />
          <rect x="68" y="19" width="19.500" height="45" rx="9.700" fill="#59b083" /><path d="M93 64V54A9.700 10 0 1 1 102.500 64Z" fill="#59b083" />
          <path d="M38 68V78A9.700 10 0 1 1 28.500 68Z" fill="#cf375d" /><rect x="44" y="68" width="19.500" height="44" rx="9.700" fill="#cf375d" />
          <rect x="68" y="68" width="44" height="20" rx="10" fill="#e5b44c" /><path d="M68 93H77.500A9.700 10 0 1 1 68 103Z" fill="#e5b44c" />
        </AppIcon>
        <AppIcon>
          <defs>{padColors.map((c, i) => <Grad key={i} id={"p" + i} stops={c} />)}</defs>
          <rect width="132" height="132" rx="30" fill="#b4b1bd" />
          {padColors.map((_, i) => <rect key={i} x={22 + (i % 3) * 32} y={22 + Math.floor(i / 3) * 32} width="24" height="24" rx="5" fill={`url(#p${i})`} />)}
        </AppIcon>
        <AppIcon dot>
          <rect width="132" height="132" rx="30" fill="#f3f3f5" />
          <circle cx="66" cy="67" r="57" fill="#d99a2c" opacity=".6" />
          <circle cx="66" cy="66" r="57" fill="#529f52" />
          <path d="M66 38H115.600A57 57 0 0 1 65.500 123L90 80Z" fill="#f4bd45" />
          <path d="M16.500 38A57 57 0 0 1 115.600 38H66L42 80Z" fill="#d6493a" />
          <circle cx="66" cy="65" r="28" fill="#fff" /><circle cx="66" cy="65" r="22.500" fill="#427fe6" />
        </AppIcon>
        <div className="relative h-full">
          <AppIcon>
            <defs><Grad id="s1" stops={["#d6e2e8", "#8f8f8b"]} /></defs>
            <rect width="132" height="132" rx="30" fill="url(#s1)" />
            <circle cx="66" cy="66" r="58" fill="#1d1f20" />
            <circle cx="66" cy="66" r="52" fill="none" stroke="#a9b0b2" strokeWidth="7" strokeDasharray="2.400 2.060" />
            <circle cx="66" cy="66" r="57" fill="none" stroke="#9a9f9f" strokeWidth="1.500" />
            <circle cx="66" cy="66" r="33" fill="#3c3e3f" /><circle cx="66" cy="66" r="31" fill="none" stroke="#8e9496" strokeWidth="5" strokeDasharray="1.800 1.450" />
            <circle cx="66" cy="66" r="26" fill="#555757" />
            <circle cx="66" cy="66" r="44" fill="none" stroke="#b4babc" strokeWidth="6.500" />
            <path d="M66 66H108M66 66L44 30M66 66L44 102" stroke="#b4babc" strokeWidth="6.500" />
            <circle cx="66" cy="66" r="4" fill="#55595b" />
          </AppIcon>
          <span className="absolute -right-[19px] -top-[16px] flex h-[62px] w-[62px] items-center justify-center rounded-full bg-[#e9523f] text-[32px] text-white shadow-md">3</span>
        </div>
        <AppIcon>
          <defs><linearGradient id="z1" x1="1" y1="0" x2="0" y2="1"><stop offset="0" stopColor="#3f84f0" /><stop offset=".5" stopColor="#1f61f2" /><stop offset="1" stopColor="#184fce" /></linearGradient></defs>
          <rect width="132" height="132" rx="30" fill="url(#z1)" />
          <text x="66" y="76.500" textAnchor="middle" fontSize="38" fontWeight="500" fill="#fff" stroke="#fff" strokeWidth=".6" textLength="93" lengthAdjust="spacingAndGlyphs" fontFamily="Inter, sans-serif">zoom</text>
        </AppIcon>
        <AppIcon dot>
          <rect width="132" height="132" rx="30" fill="#fff" />
          <rect x="38" y="22" width="67" height="60" rx="4" fill="#2f7ad0" /><path d="M38 26Q38 22 42 22H101Q105 22 105 26V34H38Z" fill="#2259a5" />
          <rect x="61" y="34" width="23" height="21" fill="#50a5e2" /><rect x="84" y="34" width="21" height="21" fill="#75d8fa" /><rect x="84" y="55" width="21" height="22" fill="#50a5e2" /><rect x="61" y="55" width="23" height="22" fill="#3279cb" />
          <path d="M61 75H95L72 87Z" fill="#2259a5" />
          <path d="M35 68L61 82L72 90L108 70V105Q108 109 104 109H38Q35 109 35 105Z" fill="#53aae6" />
          <path d="M72 88L108 70V107Z" fill="#4a9fe0" /><path d="M61 83L108 109H40Q35 109 35 105V83Z" fill="#5bb1ea" />
          <rect x="12" y="41" width="50" height="49" rx="4" fill="#2769c4" />
          <ellipse cx="36.500" cy="65.500" rx="10" ry="11" fill="none" stroke="#fff" strokeWidth="5" />
        </AppIcon>
        <AppIcon dot>
          <defs><linearGradient id="m1" x1="0" y1="0" x2=".6" y2="1"><stop offset="0" stopColor="#faef9e" /><stop offset=".6" stopColor="#f9df63" /><stop offset="1" stopColor="#f7d94e" /></linearGradient></defs>
          <rect width="132" height="132" rx="24" fill="url(#m1)" />
          <path d="M33 35C21 35 15 46 15 66S21 97 33 97C45 97 48 86 66 66C48 46 45 35 33 35Z" fill="#4a4a48" />
          <path d="M99 35C111 35 117 46 117 66S111 97 99 97C87 97 84 86 66 66C84 46 87 35 99 35Z" fill="#f8f8f8" />
        </AppIcon>
        <AppIcon dot>
          <defs><linearGradient id="y1" x1="0" y1="0" x2="1" y2=".5"><stop offset="0" stopColor="#3fe05c" /><stop offset=".4" stopColor="#b4f24e" /><stop offset="1" stopColor="#ece04a" /></linearGradient></defs>
          <rect x="3" y="3" width="126" height="126" fill="url(#y1)" />
          <path d="M3 129V60L14 18V118H118V14L129 3V129Z" fill="#dfe04c" />
          <path d="M3 14V100L14 118V14Z" fill="#7be04a" opacity=".8" />
          <rect x="14" y="14" width="104" height="104" fill="#a9b83c" opacity=".75" />
          <rect x="19" y="20" width="94" height="92" fill="#081004" />
          <text x="28" y="66" fontSize="48" fontWeight="700" fill="#fff" textLength="67" lengthAdjust="spacingAndGlyphs" fontFamily="Open Sans, sans-serif">PC</text>
          <rect x="31" y="95" width="35" height="6" fill="#fff" />
        </AppIcon>
        <AppIcon dot>
          <defs><Grad id="sf" stops={["#ffffff", "#d2d2d2"]} /><Grad id="sb" stops={["#48a6ec", "#3f7ae6"]} /></defs>
          <rect width="132" height="132" rx="30" fill="url(#sf)" />
          <circle cx="66" cy="66" r="56.500" fill="url(#sb)" />
          {ticks.map((a) => <path key={a} d={a % 30 === 0 ? "M66 13V23" : "M66 13V19"} transform={`rotate(${a} 66 66)`} stroke="#e6f2fc" strokeWidth="1.400" />)}
          <path d="M106 33L62 62L70 71Z" fill="#e2574a" /><path d="M106 33L66 66L70 71Z" fill="#c9352c" />
          <path d="M27 99L62 62L70 71Z" fill="#f3f3f3" /><path d="M27 99L66 66L70 71Z" fill="#c3c3c3" />
        </AppIcon>
      </div>
      <i className="ml-[60px] h-[142px] w-[2px] bg-[#7a5a9a]/80" />
      <AppIcon dot m="ml-[51px] -mt-[4px]" size="h-[140px] w-[140px]" box="0 0 140 140"><AnyConnectArt /></AppIcon>
      <AppIcon dot m="ml-[37px]">
        <defs><Grad id="zu" stops={["#4797f8", "#2669dc"]} /></defs>
        <rect width="132" height="132" rx="30" fill="url(#zu)" />
        <rect x="26" y="37" width="63" height="58" rx="12" fill="#fff" />
        <path d="M89 53L105 41Q112 36 112 46V86Q112 97 105 91L89 80Z" fill="#fff" />
        <path d="M62 59C58 50 68 44 73 53" fill="none" stroke="#000" strokeWidth="5" strokeLinecap="round" />
      </AppIcon>
      <AppIcon dot m="ml-[40px]">
        <defs><Grad id="tm" stops={["#d6e3ea", "#7c7c7c"]} /></defs>
        <rect width="132" height="132" rx="30" fill="url(#tm)" />
        <rect x="5" y="5" width="122" height="122" rx="26" fill="#000" /><rect x="14" y="15" width="104" height="102" rx="17" fill="#262626" />
        <path d="M25 26L38 34L25 42" fill="none" stroke="#fff" strokeWidth="4" /><path d="M45 49H64" stroke="#fff" strokeWidth="4" />
      </AppIcon>
      <i className="ml-[58px] h-[142px] w-[2px] bg-[#7a5a9a]/80" />
      <AppIcon m="ml-[47px] pt-[3px]" size="h-[128px] w-[153px]" box="0 0 153 128">
        <defs><Grad id="fo" stops={["#7fcdf9", "#79c9f8", "#6fc3f4"]} /></defs>
        <path d="M0 10Q0 0 10 0H42C54 0 56 12 70 12.500H142Q153 12.500 153 23V60H0Z" fill="#51a8dc" />
        <path d="M0 31Q0 21 10 21H143Q153 21 153 31V118Q153 128 143 128H10Q0 128 0 118Z" fill="url(#fo)" />
        <path d="M0 113H153V118Q153 128 143 128H10Q0 128 0 118Z" fill="#55aadd" opacity=".7" />
      </AppIcon>
      <AppIcon m="ml-[37px] -mt-[13px]" size="h-[153px] w-[117px]" box="0 0 117 153">
        <defs><Grad id="tr" horizontal stops={["#626669", "#8d9193", "#6e7274", "#8a8d8f", "#55585a"]} /></defs>
        <ellipse cx="58" cy="22" rx="57" ry="14" fill="#55585c" />
        <path d="M8 22L20 8L30 12L38 1L50 10L60 6L70 2L80 14L90 10L108 22L98 34H20Z" fill="#e8e8e8" />
        <path d="M22 14L30 8L34 20L26 28ZM46 10L54 18L48 26Z" fill="#b9bcc0" />
        <path d="M30 18L42 30H26Z" fill="#6a6f78" /><path d="M40 17L50 14L54 20L44 22Z" fill="#3fb8e0" /><path d="M42 15L54 15L50 18Z" fill="#7cc04a" />
        <path d="M66 14L76 12L84 24L72 34L64 28Z" fill="#5a4a8a" /><path d="M76 22L88 20L82 32L72 34Z" fill="#d0582c" /><path d="M60 26L64 34H58Z" fill="#c83030" />
        <path d="M1 22C12 40 104 40 116 22L102 132C98 158 20 158 16 132Z" fill="url(#tr)" />
        <path d="M16 128C24 146 94 146 102 128L101 136C96 157 22 157 17 136Z" fill="#a3a6a8" opacity=".6" />
        <path d="M1 22C12 40 104 40 116 22" fill="none" stroke="#a8abad" strokeWidth="2" />
      </AppIcon>
    </div>
  );
}

export default function App() {
  return (
    <div className="flex h-[2240px] w-[3584px] flex-col overflow-hidden bg-[#05020f] font-[Inter,sans-serif]">
      <MenuBar />
      <div className="flex h-[1986px] shrink-0 flex-col bg-[linear-gradient(180deg,#2b1266_0,#000_40px)] pt-[2px]">
        <div className="h-[222px] shrink-0 overflow-hidden rounded-t-[20px] border-2 border-[#606164] bg-[#202124]">
          <TabStrip />
          <Toolbar />
          <BookmarksBar />
        </div>
        <OncallPage />
      </div>
      <div className="flex-1 bg-[linear-gradient(90deg,#0a0520_0%,#08031a_16%,#0f0830_28%,#130a3a_55%,#1b0b45_63%,#451366_66%,#3a1266_74%,#1d0c4c_84%,#120938_100%)]">
        <Dock />
      </div>
    </div>
  );
}
